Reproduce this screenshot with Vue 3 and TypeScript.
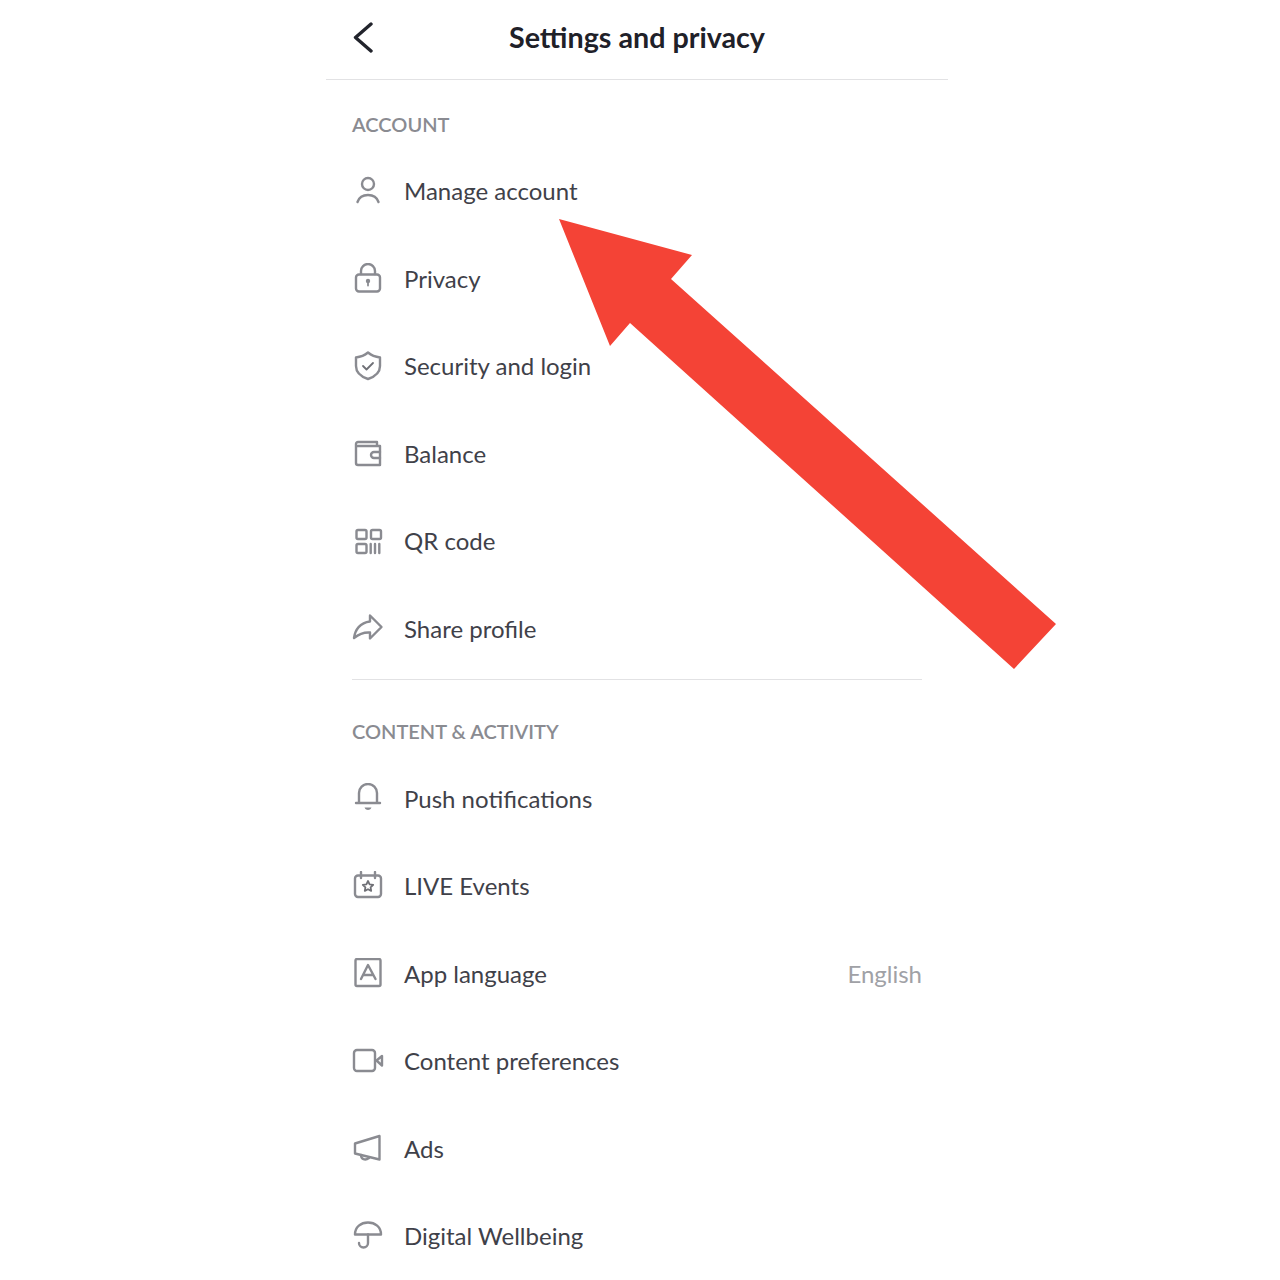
<template>
  <div class="page">
    <header class="top-bar">
      <button class="back" aria-label="Back">
        <svg viewBox="0 0 32 32" width="32" height="32">
          <polyline points="20,3 4.500,16.500 20,30" />
        </svg>
      </button>
      <h1 class="title">Settings and privacy</h1>
    </header>

    <section v-for="(group, i) in groups" :key="group.name" class="group">
      <hr v-if="i > 0" class="divider" />
      <h2 class="group-name" :class="{ later: i > 0 }">{{ group.name }}</h2>
      <div v-for="row in group.rows" :key="row.label" class="row">
        <svg class="icon" viewBox="0 0 32 32" width="32" height="32">
          <template v-if="row.icon === 'person'">
            <circle cx="16" cy="8" r="6" />
            <path d="M5.5 26C7 21.5 11 19 16 19s9 2.500 10.500 7" />
          </template>
          <template v-else-if="row.icon === 'lock'">
            <rect x="4" y="11.500" width="24" height="17" rx="3" />
            <path d="M9 11V8a7 7 0 0 1 14 0v3" />
            <circle class="solid" cx="16" cy="18" r="2.200" />
            <path class="thin" d="M16 18v4.500" />
          </template>
          <template v-else-if="row.icon === 'shield'">
            <path d="M16 1.500C19 4 24 6 28 6.500V15c0 7-6 11-12 13C10 26 4 22 4 15V6.500C8 6 13 4 16 1.500Z" />
            <path class="thin dark" d="M11 15l3.500 3.500 6.500-6.500" />
          </template>
          <template v-else-if="row.icon === 'wallet'">
            <path d="M25 8V4H6a2 2 0 0 0-2 2v19a2 2 0 0 0 2 2h22V8H6" />
            <path d="M28 14h-6a3 3 0 0 0 0 6h6" />
          </template>
          <template v-else-if="row.icon === 'qr'">
            <rect x="4.500" y="4" width="10" height="9" rx="1.500" />
            <rect x="19" y="4" width="10" height="9" rx="1.500" />
            <rect x="4.500" y="18" width="10" height="9" rx="1.500" />
            <path d="M18.700 18v9M23 18v9M27.300 18v9" />
          </template>
          <template v-else-if="row.icon === 'share'">
            <path d="M18 2.500L29.500 14 18 25.500v-6C12 19 7 21 2 25c1-8 6-15.500 16-16.500Z" />
          </template>
          <template v-else-if="row.icon === 'bell'">
            <path d="M7 19.500V10a9 9 0 0 1 18 0v9.500" />
            <path d="M4 20h24" />
            <path class="solid" d="M12.500 24.500h7c-.8 1.800-2.300 2.500-3.500 2.500s-2.700-.7-3.500-2.500Z" />
          </template>
          <template v-else-if="row.icon === 'calendar'">
            <rect x="3" y="4.500" width="26" height="21.500" rx="3" />
            <path d="M9 1v6M23 1v6" />
            <path class="thin dark" d="M16 10l1.600 3.300 3.600.5-2.600 2.500.6 3.600-3.200-1.700-3.200 1.700.6-3.600-2.600-2.500 3.600-.5Z" />
          </template>
          <template v-else-if="row.icon === 'language'">
            <rect x="3.500" y="1" width="25" height="27" rx="1.500" />
            <path d="M9 21l7-14 7.500 14M11.500 17H21" />
          </template>
          <template v-else-if="row.icon === 'video'">
            <rect x="2" y="4" width="21" height="21" rx="3" />
            <path d="M24.500 14.500L30 10v9.500Z" />
          </template>
          <template v-else-if="row.icon === 'ads'">
            <path d="M27.500 3v23.500L3 20.500v-10Z" />
            <path d="M9 22c0 4 4 6 8 3" />
          </template>
          <template v-else-if="row.icon === 'umbrella'">
            <path d="M3 13.500C3 6 9 1.500 16 1.500s13 4.500 13 12Z" />
            <path d="M16 13.500V22a4.500 4.500 0 0 1-9 0" />
          </template>
        </svg>
        <span class="label">{{ row.label }}</span>
        <span v-if="row.value" class="value">{{ row.value }}</span>
      </div>
    </section>

    <svg class="arrow" viewBox="0 0 500 452" width="500" height="452">
      <polygon points="3,1 136,37 115,61 500,406 458,451 74,105 54,128" />
    </svg>
  </div>
</template>

<script setup lang="ts">
interface Row {
  icon: string
  label: string
  value?: string
}

const groups: { name: string; rows: Row[] }[] = [
  {
    name: 'ACCOUNT',
    rows: [
      { icon: 'person', label: 'Manage account' },
      { icon: 'lock', label: 'Privacy' },
      { icon: 'shield', label: 'Security and login' },
      { icon: 'wallet', label: 'Balance' },
      { icon: 'qr', label: 'QR code' },
      { icon: 'share', label: 'Share profile' },
    ],
  },
  {
    name: 'CONTENT & ACTIVITY',
    rows: [
      { icon: 'bell', label: 'Push notifications' },
      { icon: 'calendar', label: 'LIVE Events' },
      { icon: 'language', label: 'App language', value: 'English' },
      { icon: 'video', label: 'Content preferences' },
      { icon: 'ads', label: 'Ads' },
      { icon: 'umbrella', label: 'Digital Wellbeing' },
    ],
  },
]
</script>

<style>
html,
body {
  margin: 0;
  background: #fff;
  overflow: hidden;
}
</style>

<style scoped>
.page {
  position: relative;
  height: 1280px;
  overflow: hidden;
  font-family: Lato, 'Liberation Sans', sans-serif;
}

.top-bar {
  display: grid;
  grid-template-columns: 1fr auto 1fr;
  align-items: center;
  width: 622px;
  height: 79px;
  margin-left: 326px;
  padding-bottom: 5px;
  box-sizing: border-box;
  box-shadow: 0 1px 0 #e2e2e4;
}

.back {
  width: 32px;
  height: 32px;
  margin-left: 25px;
  padding: 0;
  border: 0;
  background: none;
}

.back svg {
  display: block;
  fill: none;
  stroke: #22242c;
  stroke-width: 3.4;
  stroke-linecap: round;
  stroke-linejoin: round;
}

.title {
  grid-column: 2;
  margin: 0;
  font-size: 28.7px;
  font-weight: 700;
  color: #1f2129;
}

.group {
  width: 570px;
  margin-left: 352px;
}

.divider {
  height: 1px;
  margin: 7px 0 0;
  border: 0;
  background: #e2e2e4;
}

.group-name {
  margin: 0;
  padding-top: 22px;
  font-size: 20px;
  font-weight: 600;
  line-height: 46px;
  color: #8a8b91;
}

.group-name.later {
  padding-top: 29px;
  line-height: 45.5px;
}

.row {
  display: flex;
  align-items: center;
  gap: 20px;
  height: 87.5px;
}

.icon {
  flex: none;
  margin-top: 2px;
  fill: none;
  stroke: #8a8b91;
  stroke-width: 2.4;
  stroke-linejoin: round;
  stroke-linecap: round;
}

.icon .solid {
  fill: #8a8b91;
  stroke: none;
}

.icon .thin {
  stroke-width: 1.8;
}

.icon .dark {
  stroke: #6f7076;
}

.label {
  font-size: 24px;
  color: #3f4149;
}

.value {
  margin-left: auto;
  font-size: 24px;
  color: #a0a1a6;
}

.arrow {
  position: absolute;
  left: 556px;
  top: 218px;
  fill: #f44336;
}
</style>
